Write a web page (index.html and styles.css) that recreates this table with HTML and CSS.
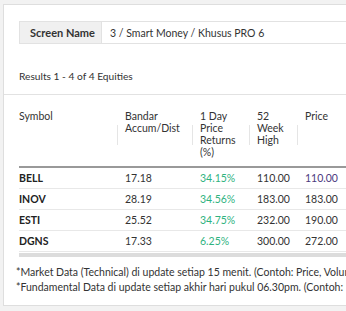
FILE: index.html
```html
<html>
    <head>
        <title>Screener Results</title>
        <link rel="stylesheet" href="styles.css">
    </head>
    <body>
        <div class="card">
            <div class="screen-box">
                <span class="screen-label">Screen Name</span>
                <span class="screen-value">3 / Smart Money / Khusus PRO 6</span>
            </div>
            <p class="results">Results 1 - 4 of 4 Equities</p>
            <div class="table-wrap">
                <table class="grid">
                    <thead>
                        <tr>
                            <th class="c-sym">Symbol</th>
                            <th class="c-ban">Bandar<br>Accum/Dist</th>
                            <th class="c-ret">1 Day<br>Price<br>Returns<br>(%)</th>
                            <th class="c-high">52<br>Week<br>High</th>
                            <th class="c-price">Price</th>
                            <th class="c-more">Volume</th>
                        </tr>
                    </thead>
                    <tbody>
                        <tr>
                            <td class="sym">BELL</td>
                            <td>17.18</td>
                            <td class="up">34.15%</td>
                            <td>110.00</td>
                            <td class="hl">110.00</td>
                            <td></td>
                        </tr>
                        <tr>
                            <td class="sym">INOV</td>
                            <td>28.19</td>
                            <td class="up">34.56%</td>
                            <td>183.00</td>
                            <td>183.00</td>
                            <td></td>
                        </tr>
                        <tr>
                            <td class="sym">ESTI</td>
                            <td>25.52</td>
                            <td class="up">34.75%</td>
                            <td>232.00</td>
                            <td>190.00</td>
                            <td></td>
                        </tr>
                        <tr>
                            <td class="sym">DGNS</td>
                            <td>17.33</td>
                            <td class="up">6.25%</td>
                            <td>300.00</td>
                            <td>272.00</td>
                            <td></td>
                        </tr>
                    </tbody>
                </table>
                <div class="scrollbar"></div>
            </div>
            <div class="notes">
                <p>*Market Data (Technical) di update setiap 15 menit. (Contoh: Price, Volume, Value)</p>
                <p>*Fundamental Data di update setiap akhir hari pukul 06.30pm. (Contoh: EPS, PER)</p>
            </div>
        </div>
    </body>
</html>
```

FILE: styles.css
```css
body {
    margin: 0;
    background-color: #f2f2f2;
    font-family: Lato, "Open Sans", sans-serif;
    font-size: 10.5px;
    color: #333;
    overflow: hidden;
}

.card {
    margin: 4px 0 0 3px;
    width: 520px;
    height: 302px;
    box-sizing: border-box;
    background-color: #fff;
    border: 1px solid #dedede;
    padding-top: 16px;
}

.screen-box {
    display: flex;
    margin-left: 15px;
    height: 23px;
    border: 1px solid #e2e2e2;
    box-sizing: border-box;
    align-items: stretch;
}

.screen-label {
    display: flex;
    align-items: center;
    width: 82px;
    padding-left: 10px;
    box-sizing: border-box;
    background-color: #f0f0f0;
    border-right: 1px solid #e2e2e2;
    font-weight: bold;
    font-size: 11px;
}

.screen-value {
    display: flex;
    align-items: center;
    padding-left: 8px;
    font-size: 10.5px;
}

.results {
    margin: 0;
    padding: 26px 0 0 15px;
    height: 51px;
    box-sizing: border-box;
    font-size: 10.2px;
    border-bottom: 1px solid #e2e2e2;
}

.table-wrap {
    padding-left: 15px;
}

.grid {
    border-collapse: collapse;
    font-size: 10.5px;
    color: #333;
}

.grid th {
    position: relative;
    text-align: left;
    vertical-align: top;
    font-weight: normal;
    line-height: 12px;
    padding: 15px 0 8px 8px;
    height: 70px;
    box-sizing: border-box;
    border-bottom: 2px solid #999;
}

.grid th::before {
    content: "";
    position: absolute;
    left: 0;
    top: 30px;
    height: 20px;
    border-left: 1px solid #e5e5e5;
}

.grid th.c-sym::before {
    display: none;
}

.grid td {
    height: 21px;
    padding: 0 0 0 8px;
    border-bottom: 1px solid #e8e8e8;
    box-sizing: border-box;
}

.grid .c-sym,
.grid .sym {
    padding-left: 0;
    width: 98px;
}

.c-ban { width: 75px; }
.c-ret { width: 57px; }
.c-high { width: 48px; }
.c-price { width: 60px; }
.c-more { width: 60px; }

.sym {
    font-weight: bold;
    color: #222;
}

.up {
    color: #2fb37f;
}

.hl {
    color: #4b3a7d;
}

.scrollbar {
    margin-top: 1px;
    height: 4px;
    background-color: #dcdcdc;
}

.notes {
    padding: 8px 0 0 12px;
    font-size: 10.5px;
    line-height: 15px;
    white-space: nowrap;
}

.notes p {
    margin: 0;
}
```
